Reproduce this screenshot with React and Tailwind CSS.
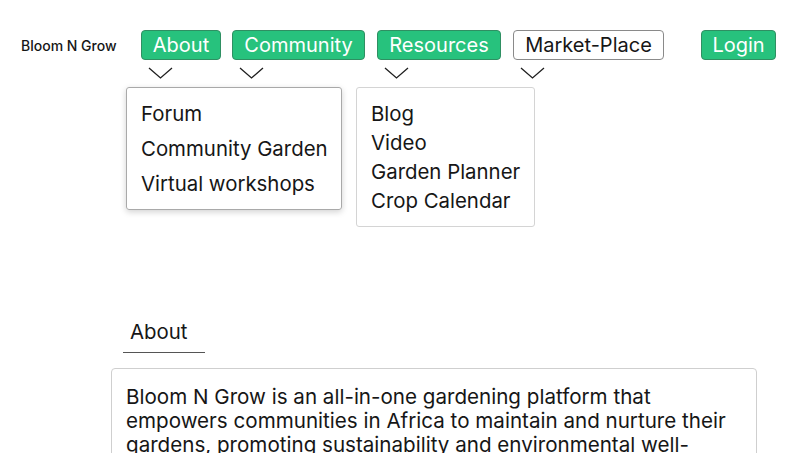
import { useState } from 'react';

const menu = [
  { label: 'About', w: 'w-[80px]', gap: 'mr-[11px]', green: true },
  { label: 'Community', w: 'w-[133px]', gap: 'mr-[12px]', green: true },
  { label: 'Resources', w: 'w-[124px]', gap: 'mr-[12px]', green: true },
  { label: 'Market-Place', w: 'w-[151px]', gap: '', green: false },
];

function Chevron() {
  return (
    <svg width="25" height="12" viewBox="0 0 25 12" className="ml-[7px] mt-[7px]">
      <path d="M1 1 L12.5 11 L24 1" fill="none" stroke="#1f1f1f" strokeWidth="1.3" />
    </svg>
  );
}

function NavButton({ label, w, green }) {
  const cls = green
    ? 'bg-[#27c27d] text-white border-[#2f8f62]'
    : 'bg-white text-[#161616] border-[#8a8a8a]';
  return (
    <button className={`${w} h-[30px] border rounded-[4px] text-[20px] leading-none ${cls}`}>
      {label}
    </button>
  );
}

export default function App() {
  const [open] = useState(true);

  return (
    <div className="h-screen overflow-hidden bg-white text-[#161616] font-['Inter',sans-serif]">
      {/* Top navigation */}
      <nav className="flex items-start pt-[30px] pl-[21px]">
        <div className="h-[30px] flex items-center text-[14px] font-medium w-[120px]">Bloom N Grow</div>
        <div className="flex">
          {menu.map((m) => (
            <div key={m.label} className={`flex flex-col ${m.gap}`}>
              <NavButton {...m} />
              <Chevron />
            </div>
          ))}
        </div>
        <div className="ml-[37px]">
          <button className="w-[75px] h-[30px] border rounded-[4px] text-[20px] leading-none bg-[#27c27d] text-white border-[#2f8f62]">
            Login
          </button>
        </div>
      </nav>

      {/* Dropdowns */}
      {open && (
        <div className="flex items-start gap-[14px] pl-[126px] mt-[8px]">
          <ul className="w-[216px] border border-[#a9a9a9] rounded-[3px] shadow-[0_2px_6px_rgba(0,0,0,0.18)] py-[8px] pl-[14px] text-[20.4px] leading-[35px]">
            <li>Forum</li>
            <li>Community Garden</li>
            <li>Virtual workshops</li>
          </ul>
          <ul className="w-[179px] border border-[#d4d4d4] rounded-[3px] py-[11px] pl-[14px] text-[20.4px] leading-[29px]">
            <li>Blog</li>
            <li>Video</li>
            <li>Garden Planner</li>
            <li>Crop Calendar</li>
          </ul>
        </div>
      )}

      {/* About section */}
      <section className="mt-[93px] pl-[111px]">
        <h2 className="ml-[12px] w-[82px] pl-[7px] pb-[8px] border-b border-[#555] text-[20.4px] leading-[24px]">
          About
        </h2>
        <div className="mt-[15px] w-[646px] border border-[#cfcfcf] rounded-[4px] pt-[16px] pb-[15px] pl-[14px] pr-[15px] text-[20.6px] leading-[24px]">
          Bloom N Grow is an all-in-one gardening platform that empowers communities in Africa to maintain and nurture their gardens, promoting sustainability and environmental well-being through shared knowledge and local resources.
        </div>
      </section>
    </div>
  );
}
